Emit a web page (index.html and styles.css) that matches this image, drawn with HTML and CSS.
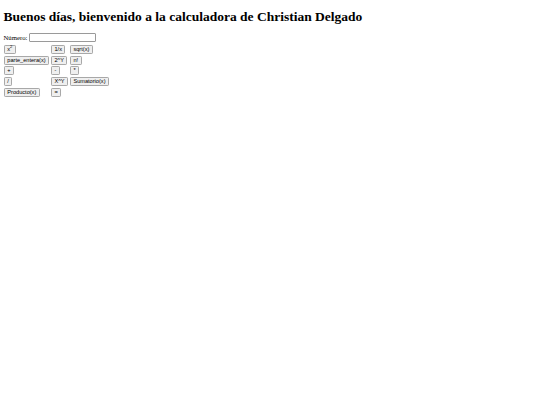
FILE: index.html
```html
<!DOCTYPE html>
<html lang="es">
<head>
<meta charset="utf-8">
<title>Calculadora</title>
<link rel="stylesheet" href="styles.css">
</head>
<body>
<h1 class="title">Buenos días, bienvenido a la calculadora de Christian Delgado</h1>
<div class="field"><label for="num">Número:</label> <input type="text" id="num" class="num"></div>
<table class="keys">
<tr><td><button class="key">x<sup>2</sup></button></td><td><button class="key">1/x</button></td><td><button class="key">sqrt(x)</button></td></tr>
<tr><td><button class="key">parte_entera(x)</button></td><td><button class="key">2^Y</button></td><td><button class="key">n!</button></td></tr>
<tr><td><button class="key">+</button></td><td><button class="key">-</button></td><td><button class="key">*</button></td></tr>
<tr><td><button class="key">/</button></td><td><button class="key">X^Y</button></td><td><button class="key">Sumatorio(x)</button></td></tr>
<tr><td><button class="key">Producto(x)</button></td><td><button class="key">=</button></td><td></td></tr>
</table>
</body>
</html>
```

FILE: styles.css
```css
body {
  margin: 3.4px;
  font-family: "Liberation Serif", "Times New Roman", serif;
  font-size: 6.75px;
  background: #ffffff;
  color: #000000;
}
.title {
  font-family: "Liberation Serif", "Times New Roman", serif;
  font-size: 13.5px;
  font-weight: bold;
  line-height: 15px;
  margin: 6px 0 9px;
}
.field {
  line-height: 9px;
  height: 9px;
  display: flex;
  align-items: center;
  gap: 2px;
}
.num {
  box-sizing: border-box;
  width: 67px;
  height: 9px;
  margin: 0;
  padding: 0 1px;
  border: 1px solid #9a9a9a;
  border-radius: 1px;
  font-family: "Liberation Sans", Arial, sans-serif;
  font-size: 5.6px;
}
.keys {
  border-spacing: 1px;
  margin: 1.2px 0 0 -1px;
}
.keys td {
  padding: 0.35px 0.42px;
}
.key {
  box-sizing: border-box;
  display: block;
  height: 9px;
  margin: 0;
  padding: 0 2.5px;
  border: 1px solid #a8a8a8;
  border-radius: 1.2px;
  background: #efefef;
  color: #000000;
  font-family: "Liberation Sans", Arial, sans-serif;
  font-size: 5.625px;
  line-height: 7px;
}
.key sup {
  font-size: 4px;
  line-height: 0;
}
```
